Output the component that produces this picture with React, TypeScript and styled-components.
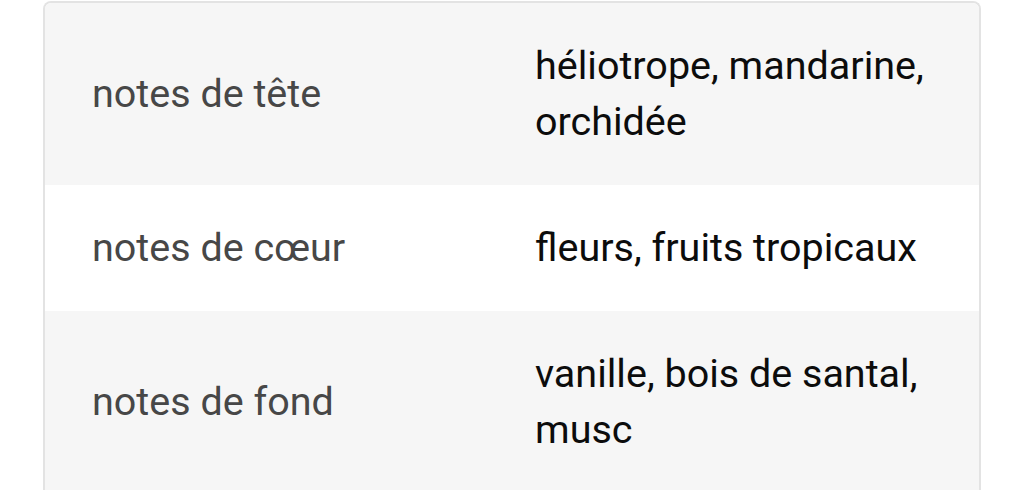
import React from "react";
import styled, { createGlobalStyle } from "styled-components";

const Global = createGlobalStyle`
  html, body { margin: 0; padding: 0; background: #ffffff; }
  body { font-family: Roboto, "Noto Sans", Arial, sans-serif; }
`;

const Page = styled.div`
  padding: 1px 43px 0 43px;
  height: 489px;
  overflow: hidden;
`;

const Card = styled.div`
  border: 2px solid #e3e3e3;
  border-bottom: none;
  border-radius: 8px 8px 0 0;
  overflow: hidden;
  background: #ffffff;
`;

const Row = styled.div<{ $shade: boolean }>`
  display: grid;
  grid-template-columns: 1fr 1fr;
  align-items: center;
  padding: 35px 24px;
  background: ${(p) => (p.$shade ? "#f6f6f6" : "#ffffff")};
`;

const Label = styled.div`
  padding: 0 23px;
  font-size: 39.5px;
  line-height: 56px;
  color: #474747;
`;

const Value = styled.div`
  padding: 0 23px;
  font-size: 39.5px;
  line-height: 56px;
  color: #0c0c0c;
`;

const rows = [
  { label: "notes de tête", value: "héliotrope, mandarine, orchidée" },
  { label: "notes de cœur", value: "fleurs, fruits tropicaux" },
  { label: "notes de fond", value: "vanille, bois de santal, musc" },
];

export default function App() {
  return (
    <>
      <Global />
      <Page>
        <Card>
          {rows.map((r, i) => (
            <Row key={r.label} $shade={i % 2 === 0}>
              <Label>{r.label}</Label>
              <Value>{r.value}</Value>
            </Row>
          ))}
        </Card>
      </Page>
    </>
  );
}
